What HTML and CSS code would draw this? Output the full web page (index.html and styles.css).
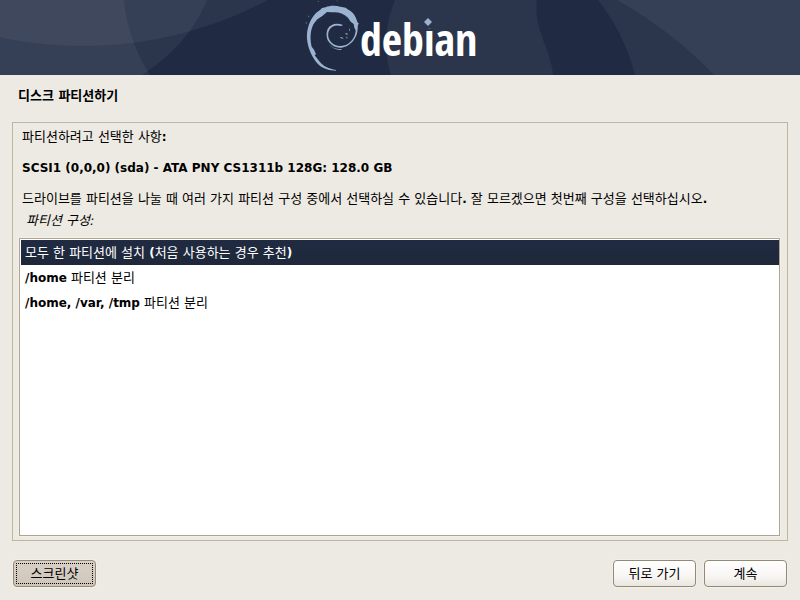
FILE: index.html
```html
<!DOCTYPE html>
<html lang="ko">
<head>
<meta charset="utf-8">
<title>디스크 파티션하기</title>
<link rel="stylesheet" href="styles.css">
</head>
<body>
<header class="banner">
  <svg class="banner-art" viewBox="0 0 800 75" role="img" aria-label="debian">
    <rect width="800" height="75" fill="#202b43"/>
    <g fill="#fff" fill-opacity=".05">
      <circle cx="83" cy="-349" r="395"/>
      <path d="M0 0H207Q201 15 189 32Q171 56 142 75H0Z"/>
      <path d="M0 0H124Q126 23 134 43Q140 60 150 75H0Z"/>
      <path d="M395 0Q379 38 391 75H553C552 51 533 30 537 0Z"/>
      <path d="M598 0Q624 33 635 75H800V0Z"/>
      <path d="M617 0Q672 31 714 75H800V0Z"/>
    </g>
    <g transform="translate(290) scale(.33333)" fill="#9bb3d0">
      <path d="M138 212C120 212 101 207 87 195C69 177 54 149 51 116C49 87 60 58 78 39L91 29L96 24L107 22C117 17 136 16 151 20L167 23L175 29C190 37 198 49 202 66L204 70L203 88C202 109 189 129 171 138C151 148 131 143 120 130C109 119 107 101 113 87C120 74 138 67 159 75L154 78C137 73 123 80 118 90C112 102 114 115 123 126C135 140 156 141 172 133C187 124 196 108 197 91L193 83L191 72L182 65L174 53C160 40 144 35 125 37L111 36L97 48L82 58L73 69C61 87 59 113 65 140L72 149L78 163L74 166L88 184C99 199 117 207 138 210Z"/>
      <path d="M116 133C128 146 143 148 156 147L152 150C137 150 124 143 116 133ZM151 111L161 114L158 116L151 114ZM166 99L174 101L172 104L167 103ZM178 84L180 91L177 94ZM169 109L173 113L170 116Z"/>
      <path fill-opacity=".4" d="M54 47H58V52H54ZM47 66H51V71H47ZM83 3H87V6H83ZM140 -1L144 4L141 5Z"/>
      <path d="M189 56L200 65L207 71L202 76L194 73Z"/>
    </g>
    <text class="wordmark" x="360" y="56">debian</text>
    <path d="M423 15H434V28H423Z" fill="#2b354c"/>
    <path d="M428 18L432 22L428 26L424 22Z" fill="#9bb3d0"/>
  </svg>
</header>
<form class="installer">
  <h1>디스크 파티션하기</h1>
  <main class="panel">
    <p>파티션하려고 선택한 사항<b>:</b></p>
    <p><b>SCSI1 (0,0,0) (sda) - ATA PNY CS1311b 128G: 128.0 GB</b></p>
    <p>드라이브를 파티션을 나눌 때 여러 가지 파티션 구성 중에서 선택하실 수 있습니다<b>.</b> 잘 모르겠으면 첫번째 구성을 선택하십시오<b>.</b></p>
    <p class="caption" id="scheme">파티션 구성:</p>
    <div class="list" role="radiogroup" aria-labelledby="scheme">
      <label class="option"><input type="radio" name="scheme" checked>모두 한 파티션에 설치 <b>(</b>처음 사용하는 경우 추천<b>)</b></label>
      <label class="option"><input type="radio" name="scheme"><b>/home</b> 파티션 분리</label>
      <label class="option"><input type="radio" name="scheme"><b>/home, /var, /tmp</b> 파티션 분리</label>
    </div>
  </main>
  <footer class="actions">
    <button type="button" class="shot">스크린샷</button>
    <button type="button">뒤로 가기</button>
    <button type="submit">계속</button>
  </footer>
</form>
</body>
</html>
```

FILE: styles.css
```css
* { box-sizing: border-box; }

body {
  display: flex;
  flex-direction: column;
  min-height: 100vh;
  margin: 0;
  background: #edeae3;
  color: #000;
  font: 13px/21px "DejaVu Sans", "Noto Sans CJK KR", sans-serif;
}

.banner-art { display: block; width: 100%; }

.wordmark {
  fill: #fff;
  font: bold 44px "Open Sans Condensed", "Roboto Condensed", "Noto Sans Condensed", "Open Sans SemiCondensed", Lato, sans-serif;
}

.installer {
  display: flex;
  flex: 1;
  flex-direction: column;
  padding: 10px 12px 13px;
}

h1 {
  margin: 0 6px 16px;
  font-size: 13px;
  line-height: 21px;
}

.panel {
  display: flex;
  flex: 1;
  flex-direction: column;
  padding: 3px 7px 4px 6px;
  border: 1px solid #c0b5a2;
}

p { margin: 0 3px 10px; }

b {
  font-size: 12px;
  line-height: 1;
}

.panel .caption {
  margin: -9px 7px 7px;
  font-style: italic;
}

.list {
  flex: 1;
  padding: 1px 0 1px 1px;
  border: 1px solid #b0a48f;
  background: #fff;
  box-shadow: 0 0 0 1px #f2f0e9;
}

.option {
  display: block;
  padding: 0 4px;
  line-height: 25px;
}

.option input {
  position: absolute;
  margin: 0;
  appearance: none;
}

.option:has(input:checked) {
  background: linear-gradient(#202b43, #1e2839);
  color: #fff;
}

.actions {
  display: flex;
  gap: 8px;
  padding: 19px 1px 0;
}

button {
  width: 83px;
  height: 27px;
  padding: 0;
  border: 1px solid #958875;
  border-radius: 4px;
  background: linear-gradient(#fff, #f8f6f4 60%, #e9e5df);
  box-shadow: 0 0 0 1px #f3f0ea;
  color: #000;
  font: inherit;
}

.shot {
  margin-right: auto;
  background: linear-gradient(#d9d1c7, #cfc6ba);
  outline: 1px dotted #000;
  outline-offset: -4px;
}
```
